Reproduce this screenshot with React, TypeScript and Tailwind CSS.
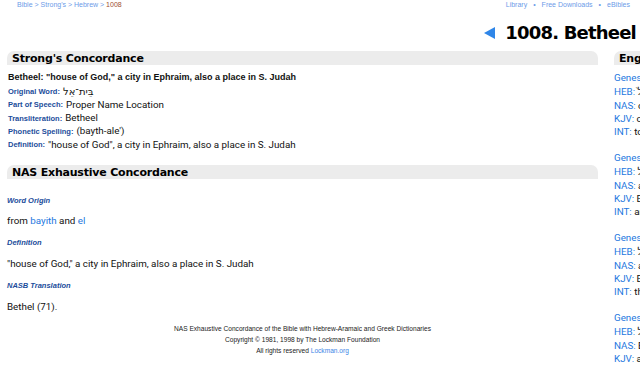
import React from 'react'

const verses = [
  { ref: 'Genesis 12:8', heb: 'מִבֵּֽית־אֵל֙', nas: 'on the west of Bethel', kjv: 'on the west of Bethel', int: 'to the mountain east of Bethel' },
  { ref: 'Genesis 13:3', heb: 'בֵּֽית־אֵ֑ל', nas: 'as far as Bethel', kjv: 'Bethel, unto the place', int: 'and as far Bethel' },
  { ref: 'Genesis 28:19', heb: 'בֵּֽית־אֵ֑ל', nas: 'and he called Bethel', kjv: 'Bethel: but the name', int: 'the name of that place' },
  { ref: 'Genesis 31:13', heb: 'בֵּֽית־אֵ֔ל', nas: 'Bethel, where you', kjv: 'am the God of Bethel', int: 'I am the God of Bethel' },
]

const details = [
  { label: 'Original Word:', value: 'בֵּית־אֵל', hebrew: true },
  { label: 'Part of Speech:', value: 'Proper Name Location' },
  { label: 'Transliteration:', value: 'Betheel' },
  { label: 'Phonetic Spelling:', value: '(bayth-ale\')' },
  { label: 'Definition:', value: '"house of God", a city in Ephraim, also a place in S. Judah' },
]

function SectionBar({ title }: { title: string }) {
  return (
    <div className="h-[14px] bg-[#ececec] rounded-t-[7px] pl-[5px] flex items-center">
      <span className="font-['DejaVu_Sans',sans-serif] font-bold text-[11px] tracking-[-0.2px] text-black leading-none whitespace-nowrap">{title}</span>
    </div>
  )
}

function SubLabel({ children }: { children: React.ReactNode }) {
  return (
    <div className="h-[21.4px] flex items-center font-['Liberation_Sans',sans-serif] font-bold italic text-[7.5px] text-[#1b4d9b]">
      {children}
    </div>
  )
}

export default function App() {
  return (
    <div className="w-[640px] h-[366px] overflow-hidden bg-white font-['Roboto',sans-serif] text-[#111]">
      {/* Top nav */}
      <div className="flex justify-between h-[10px] pl-[17px] pr-[10px] font-['Liberation_Sans',sans-serif] text-[7px] leading-[10px]">
        <div className="text-[#6d9be8]">
          Bible &gt; Strong's &gt; Hebrew &gt; <span className="text-[#a0502e]">1008</span>
        </div>
        <div className="text-[#6d9be8] flex gap-[6px]">
          <span>Library</span><span>•</span><span>Free Downloads</span><span>•</span><span>eBibles</span>
        </div>
      </div>

      {/* Title */}
      <div className="flex justify-end items-center h-[41px] pt-[4px] pr-[4px]">
        <svg width="11" height="12" viewBox="0 0 11 12" className="mr-[10px]">
          <polygon points="0,6 11,0 11,12" fill="#2f86e8" />
        </svg>
        <h1 className="font-['DejaVu_Sans',sans-serif] font-bold text-[18px] tracking-[-0.8px] leading-none text-black">1008. Betheel</h1>
      </div>

      <div className="flex gap-[16px] pl-[7px]">
        {/* Left column */}
        <div className="w-[591px] shrink-0">
          <SectionBar title="Strong's Concordance" />
          <div className="pl-[1px] pt-[5px]">
            <div className="h-[15px] flex items-center font-['Liberation_Sans',sans-serif] font-bold text-[9px]">
              Betheel: "house of God," a city in Ephraim, also a place in S. Judah
            </div>
            {details.map((d) => (
              <div key={d.label} className="h-[13.3px] flex items-center gap-[3px]">
                <span className="font-['Liberation_Sans',sans-serif] font-bold text-[7.5px] text-[#1b4d9b]">{d.label}</span>
                <span className={d.hebrew ? "font-['DejaVu_Sans',serif] text-[10px]" : 'text-[9.8px]'}>{d.value}</span>
              </div>
            ))}
          </div>

          <div className="mt-[14px]">
            <SectionBar title="NAS Exhaustive Concordance" />
          </div>
          <div className="pt-[10px]">
            <SubLabel>Word Origin</SubLabel>
            <div className="h-[21.4px] flex items-center text-[9.8px]">
              from&nbsp;<span className="text-[#1e78e0]">bayith</span>&nbsp;and&nbsp;<span className="text-[#1e78e0]">el</span>
            </div>
            <SubLabel>Definition</SubLabel>
            <div className="h-[21.4px] flex items-center text-[9.8px]">
              "house of God," a city in Ephraim, also a place in S. Judah
            </div>
            <SubLabel>NASB Translation</SubLabel>
            <div className="h-[21.4px] flex items-center text-[9.8px]">Bethel (71).</div>
          </div>

          <div className="pt-[5px] flex flex-col items-center font-['Liberation_Sans',sans-serif] text-[6.6px] leading-[11px] text-[#222]">
            <div>NAS Exhaustive Concordance of the Bible with Hebrew-Aramaic and Greek Dictionaries</div>
            <div>Copyright © 1981, 1998 by The Lockman Foundation</div>
            <div>All rights reserved <span className="text-[#3d86e6]">Lockman.org</span></div>
          </div>
        </div>

        {/* Right column */}
        <div className="w-[200px] shrink-0">
          <SectionBar title="English Concordance" />
          <div className="pt-[5px] text-[9.8px]">
            {verses.map((v) => (
              <div key={v.ref} className="mb-[10.8px]">
                <div className="h-[16px] flex items-center text-[#1e78e0] whitespace-nowrap">{v.ref}</div>
                {[
                  ['HEB:', v.heb],
                  ['NAS:', v.nas],
                  ['KJV:', v.kjv],
                  ['INT:', v.int],
                ].map(([k, t]) => (
                  <div key={k} className="h-[13.3px] flex items-center whitespace-nowrap">
                    <span className="text-[#1e78e0]">{k}</span>&nbsp;<span>{t}</span>
                  </div>
                ))}
              </div>
            ))}
          </div>
        </div>
      </div>
    </div>
  )
}
